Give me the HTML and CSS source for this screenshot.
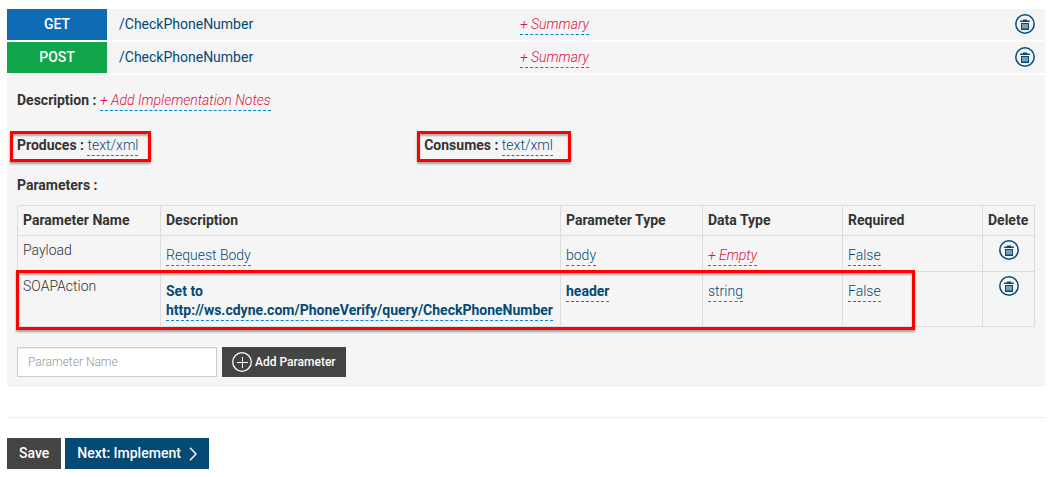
FILE: index.html
```html
<!DOCTYPE html>
<html lang="en">
<head>
<meta charset="utf-8">
<title>API Resources</title>
<link rel="stylesheet" href="styles.css">
</head>
<body>
<svg class="sprite" aria-hidden="true">
  <symbol id="trash" viewBox="0 0 20 20">
    <circle cx="10" cy="10" r="9.2" fill="none" stroke="currentColor" stroke-width="1.5"/>
    <path fill="currentColor" fill-rule="evenodd" d="M8 5.500h4v1h2.800v1.500H5.200v-1.500H8zM6 9h8v7H6zM7.500 10v4.500h1V10zM9.500 10v4.500h1V10zM11.500 10v4.500h1V10z"/>
  </symbol>
</svg>
<main class="page">
  <section class="resources">
    <div class="resource">
      <span class="verb verb-get">GET</span>
      <a class="path" href="#get">/CheckPhoneNumber</a>
      <div class="summary"><a class="editable empty" href="#summary-get">+ Summary</a></div>
      <button class="icon-button" type="button" aria-label="Delete GET resource"><svg class="icon"><use href="#trash"/></svg></button>
    </div>
    <div class="resource">
      <span class="verb verb-post">POST</span>
      <a class="path" href="#post">/CheckPhoneNumber</a>
      <div class="summary"><a class="editable empty" href="#summary-post">+ Summary</a></div>
      <button class="icon-button" type="button" aria-label="Delete POST resource"><svg class="icon"><use href="#trash"/></svg></button>
    </div>
    <div class="panel">
      <div class="field"><b>Description :</b> <a class="editable empty" href="#notes">+ Add Implementation Notes</a></div>
      <div class="media">
        <div class="field marked"><b>Produces :</b> <a class="editable" href="#produces">text/xml</a></div>
        <div class="field marked marked-wide"><b>Consumes :</b> <a class="editable" href="#consumes">text/xml</a></div>
      </div>
      <div class="field"><b>Parameters :</b></div>
      <table class="params">
        <colgroup><col class="c-name"><col class="c-desc"><col class="c-type"><col class="c-data"><col class="c-data"><col class="c-delete"></colgroup>
        <thead>
          <tr><th>Parameter Name</th><th>Description</th><th>Parameter Type</th><th>Data Type</th><th>Required</th><th>Delete</th></tr>
        </thead>
        <tbody>
          <tr>
            <td>Payload</td>
            <td><a class="editable" href="#d1">Request Body</a></td>
            <td><a class="editable" href="#t1">body</a></td>
            <td><a class="editable empty" href="#y1">+ Empty</a></td>
            <td><a class="editable" href="#r1">False</a></td>
            <td class="delete"><button class="icon-button" type="button" aria-label="Delete Payload"><svg class="icon"><use href="#trash"/></svg></button></td>
          </tr>
          <tr class="marked-row">
            <td>SOAPAction</td>
            <td><a class="editable strong" href="#d2">Set to<br>http://ws.cdyne.com/PhoneVerify/query/CheckPhoneNumber</a></td>
            <td><a class="editable strong" href="#t2">header</a></td>
            <td><a class="editable" href="#y2">string</a></td>
            <td><a class="editable" href="#r2">False</a></td>
            <td class="delete"><button class="icon-button" type="button" aria-label="Delete SOAPAction"><svg class="icon"><use href="#trash"/></svg></button></td>
          </tr>
        </tbody>
      </table>
      <form class="add">
        <input class="input" type="text" placeholder="Parameter Name" aria-label="Parameter Name">
        <button class="button button-add" type="button"><svg class="icon" viewBox="0 0 20 20"><circle cx="10" cy="10" r="9.300" fill="none" stroke="currentColor" stroke-width="1.300"/><path d="M10.500 5v11M5 10.500h11" stroke="currentColor" stroke-width="1" fill="none"/></svg>Add Parameter</button>
      </form>
    </div>
  </section>
  <hr class="rule">
  <div class="actions">
    <button class="button" type="button">Save</button>
    <button class="button button-next" type="button">Next: Implement<svg class="chevron" viewBox="0 0 8 14"><path d="M1 .7l6 6.300-6 6.300" fill="none" stroke="currentColor" stroke-width="1.400"/></svg></button>
  </div>
</main>
</body>
</html>
```
FILE: styles.css
```css
* { box-sizing: border-box; }
body {
  margin: 0;
  background: #fff;
  color: #333;
  font: 300 14px/19px Roboto, "Liberation Sans", sans-serif;
}
.sprite { display: none; }
.page { padding: 9px 6px 8px 7px; }
a { color: #044a75; text-decoration: none; }
b, th { font-weight: 700; }

.resources { display: flex; flex-direction: column; gap: 2px; }
.resource {
  display: flex;
  align-items: flex-start;
  background: #f4f4f4;
  padding-right: 10px;
}
.verb {
  width: 100px;
  padding: 6px 0;
  color: #fff;
  font-weight: 500;
  text-align: center;
}
.verb-get { background: #0f6ab4; }
.verb-post { background: #10a54a; }
.path { width: 401px; padding: 6px 0 0 12px; font-weight: 400; }
.summary { flex: 1; padding: 6px 0 0 12px; }

.editable { display: inline-block; border-bottom: 1px dashed #0088cc; vertical-align: top; }
.editable.empty { color: #dd1144; font-style: italic; }
.editable.strong { font-weight: 700; }

.icon-button {
  display: inline-flex;
  padding: 0;
  border: 0;
  background: none;
  color: #044a75;
  cursor: pointer;
}
.resource .icon-button { padding-top: 5px; }
.icon { display: block; width: 20px; height: 20px; }

.panel { padding: 16px 10px 10px; background: #f5f5f5; }
.media { display: grid; grid-template-columns: 40% 60%; margin: 25px 0 20px; }
.field { min-height: 20px; }
.marked { position: relative; justify-self: start; padding-right: 12px; }
.marked-wide { padding-right: 17px; }
.marked::after, .marked-row::after {
  content: "";
  position: absolute;
  border: 3px solid #f00;
  box-shadow: 0 2px 2px rgba(0, 0, 0, .35), inset 0 2px 2px rgba(0, 0, 0, .3);
  pointer-events: none;
}
.marked::after { inset: -5px -1px -6px -7px; }

.params {
  width: 100%;
  margin-top: 9px;
  border-collapse: collapse;
  table-layout: fixed;
}
.c-name { width: 143px; }
.c-desc { width: 400px; }
.c-type { width: 142px; }
.c-data { width: 140px; }
.c-delete { width: 52px; }
.params th, .params td {
  padding: 5px 0 5px 5px;
  border: 1px solid #ddd;
  text-align: left;
  vertical-align: top;
}
.params .editable { margin-top: 5px; }
.params .delete { padding: 4px 0 0; text-align: center; }
.marked-row { position: relative; }
.marked-row::after { inset: -2px 120px -3px -2px; }

.add { display: flex; gap: 5px; margin-top: 20px; }
.input {
  width: 200px;
  height: 30px;
  padding: 0 10px;
  border: 1px solid #ccc;
  border-radius: 0;
  background: #fff;
  box-shadow: inset 0 1px 1px rgba(0, 0, 0, .08);
  color: #333;
  font: inherit;
  font-size: 12px;
}
.input::placeholder { color: #999; }
.button {
  display: inline-flex;
  align-items: center;
  padding: 6px 12px;
  border: 0;
  background: #444;
  color: #fff;
  font: inherit;
  font-weight: 500;
  cursor: pointer;
}
.button-add { gap: 3px; height: 30px; padding: 0 10px; font-size: 12px; }
.rule { height: 1px; margin: 30px 0 20px; border: 0; background: #eee; }
.actions { display: flex; gap: 4px; }
.button-next { gap: 8px; background: #044a75; }
.chevron { width: 8px; height: 14px; }
```
